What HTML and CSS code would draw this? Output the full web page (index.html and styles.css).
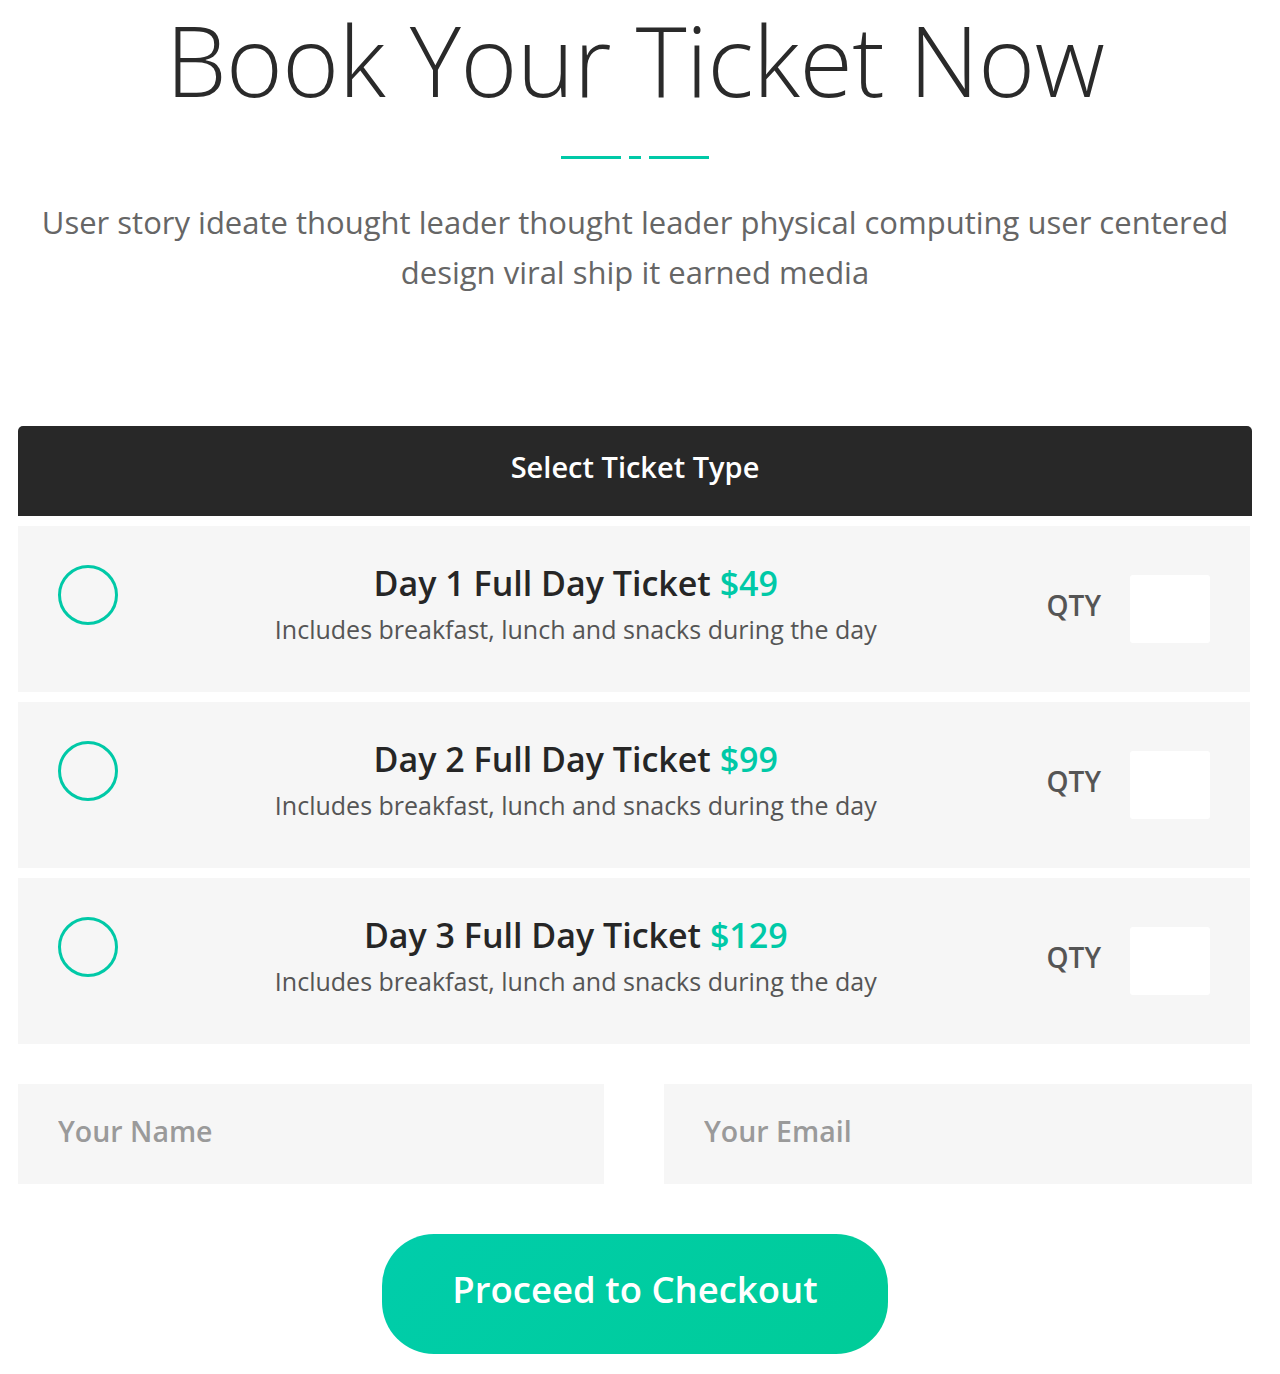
FILE: index.html
```html
<!DOCTYPE html>
<html lang="en">
<head>
<meta charset="utf-8">
<title>Book Your Ticket Now</title>
<link rel="stylesheet" href="styles.css">
</head>
<body>
<main class="page">
  <header class="intro">
    <h1 class="title">Book Your Ticket Now</h1>
    <div class="divider"><span class="seg seg-long"></span><span class="seg seg-short"></span><span class="seg seg-long"></span></div>
    <p class="lead">User story ideate thought leader thought leader physical computing user centered design viral ship it earned media</p>
  </header>

  <section class="tickets">
    <div class="tickets-head">Select Ticket Type</div>

    <div class="ticket">
      <input class="radio" type="radio" name="ticket" aria-label="Day 1">
      <div class="ticket-info">
        <div class="ticket-name">Day 1 Full Day Ticket <span class="price">$49</span></div>
        <div class="ticket-desc">Includes breakfast, lunch and snacks during the day</div>
      </div>
      <div class="qty">
        <span class="qty-label">QTY</span>
        <input class="qty-input" type="text" aria-label="Quantity">
      </div>
    </div>

    <div class="ticket">
      <input class="radio" type="radio" name="ticket" aria-label="Day 2">
      <div class="ticket-info">
        <div class="ticket-name">Day 2 Full Day Ticket <span class="price">$99</span></div>
        <div class="ticket-desc">Includes breakfast, lunch and snacks during the day</div>
      </div>
      <div class="qty">
        <span class="qty-label">QTY</span>
        <input class="qty-input" type="text" aria-label="Quantity">
      </div>
    </div>

    <div class="ticket">
      <input class="radio" type="radio" name="ticket" aria-label="Day 3">
      <div class="ticket-info">
        <div class="ticket-name">Day 3 Full Day Ticket <span class="price">$129</span></div>
        <div class="ticket-desc">Includes breakfast, lunch and snacks during the day</div>
      </div>
      <div class="qty">
        <span class="qty-label">QTY</span>
        <input class="qty-input" type="text" aria-label="Quantity">
      </div>
    </div>
  </section>

  <div class="contact">
    <input class="field" type="text" placeholder="Your Name">
    <input class="field" type="email" placeholder="Your Email">
  </div>

  <div class="actions">
    <button class="checkout" type="button">Proceed to Checkout</button>
  </div>
</main>
</body>
</html>
```

FILE: styles.css
```css
* { box-sizing: border-box; }

html, body {
  margin: 0;
  padding: 0;
  background: #ffffff;
}

body {
  font-family: "Open Sans", "Noto Sans", sans-serif;
  color: #222222;
}

.page {
  width: 1234px;
  margin: 0 0 0 18px;
  padding-top: 0;
  padding-bottom: 20px;
}

.intro {
  text-align: center;
}

.title {
  margin: 0;
  font-weight: 300;
  font-size: 97px;
  line-height: 118px;
  color: #2a2a2a;
  letter-spacing: -0.5px;
}

.divider {
  display: flex;
  justify-content: center;
  gap: 8px;
  margin-top: 38px;
}

.seg {
  display: block;
  height: 3px;
  background: #00c9a7;
}

.seg-long { width: 60px; }
.seg-short { width: 12px; }

.lead {
  margin: 38px 0 0;
  font-size: 31px;
  line-height: 50px;
  font-weight: 400;
  color: #666666;
}

.tickets {
  margin-top: 129px;
}

.tickets-head {
  height: 90px;
  padding-bottom: 10px;
  background: #282828;
  border-radius: 5px 5px 0 0;
  color: #ffffff;
  font-weight: 600;
  font-size: 29px;
  display: flex;
  align-items: center;
  justify-content: center;
}

.ticket {
  display: flex;
  align-items: center;
  height: 166px;
  margin-top: 10px;
  width: 1232px;
  background: #f6f6f6;
  padding: 0 40px;
}

.radio {
  -webkit-appearance: none;
  appearance: none;
  margin: 0 0 28px;
  width: 60px;
  height: 60px;
  border: 3px solid #00c9a7;
  border-radius: 50%;
  background: transparent;
  flex: none;
}

.ticket-info {
  flex: 1;
  text-align: center;
}

.ticket-name {
  font-size: 34px;
  font-weight: 600;
  line-height: 44px;
  color: #262626;
  margin-bottom: 4px;
}

.price {
  color: #00c9a7;
}

.ticket-desc {
  font-size: 25px;
  line-height: 40px;
  color: #555555;
  margin-bottom: 8px;
}

.qty {
  display: flex;
  align-items: center;
  gap: 29px;
  margin-left: 13px;
}

.qty-label {
  font-size: 28px;
  font-weight: 600;
  color: #555555;
  margin-bottom: 8px;
}

.qty-input {
  width: 80px;
  height: 68px;
  border: 0;
  border-radius: 3px;
  background: #ffffff;
}

.contact {
  display: grid;
  grid-template-columns: 586px 588px;
  gap: 60px;
  margin-top: 40px;
}

.field {
  height: 100px;
  border: 0;
  background: #f6f6f6;
  padding: 0 40px 6px;
  font-family: "Open Sans", "Noto Sans", sans-serif;
  font-size: 28.5px;
  font-weight: 600;
  color: #333333;
}

.field::placeholder {
  color: #9a9a9a;
}

.actions {
  display: flex;
  justify-content: center;
  margin-top: 50px;
}

.checkout {
  width: 506px;
  height: 120px;
  border: 0;
  border-radius: 52px;
  background: linear-gradient(135deg, #00cdab 0%, #00cc98 100%);
  color: #ffffff;
  font-family: "Open Sans", "Noto Sans", sans-serif;
  font-size: 36.5px;
  font-weight: 600;
  padding: 0 0 10px;
}
```
